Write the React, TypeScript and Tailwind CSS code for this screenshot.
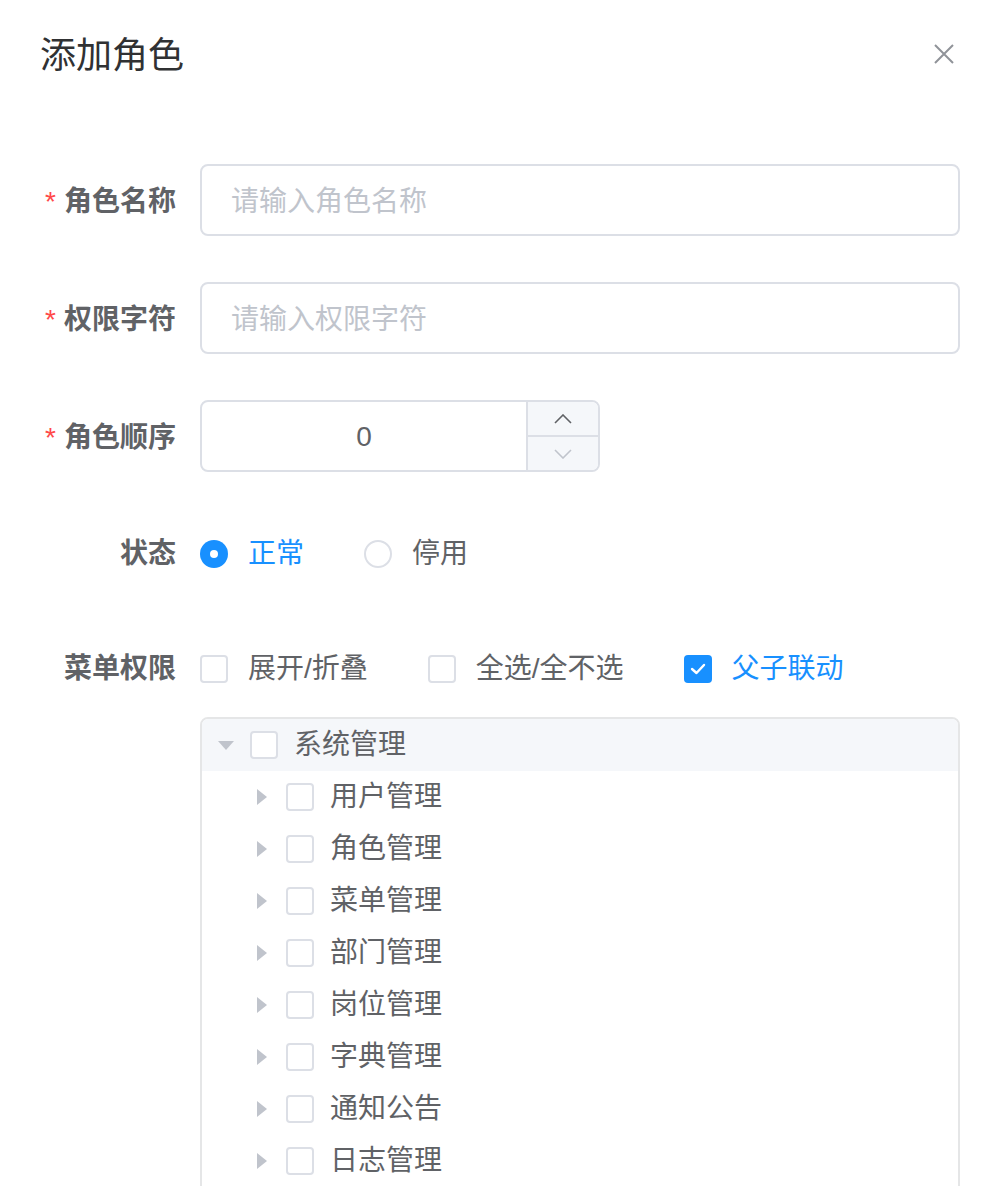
import * as React from 'react'

const FONT = 'font-["Helvetica_Neue",Helvetica,"Liberation_Sans","Noto_Sans_CJK_SC",sans-serif]'

const MENUS = ['用户管理', '角色管理', '菜单管理', '部门管理', '岗位管理', '字典管理', '通知公告', '日志管理']

function Box({ checked = false }: { checked?: boolean }) {
  if (checked) {
    return (
      <span className="flex h-[28px] w-[28px] shrink-0 items-center justify-center rounded-[4px] bg-[#1890ff]">
        <svg width="16" height="12" viewBox="0 0 16 12" fill="none">
          <polyline points="2,6 6.5,10 14,2" stroke="#fff" strokeWidth="2.4" strokeLinecap="round" strokeLinejoin="round" />
        </svg>
      </span>
    )
  }
  return <span className="block h-[28px] w-[28px] shrink-0 rounded-[4px] border-2 border-[#dcdfe6] bg-white" />
}

function Label({ text, required = false, shift = false }: { text: string; required?: boolean; shift?: boolean }) {
  return (
    <div
      className={`flex h-[72px] w-[160px] shrink-0 items-center justify-end pr-6 text-[28px] font-bold text-[#606266] ${shift ? 'pt-[4px]' : ''}`}
    >
      {required && <span className="mr-2 text-[28px] font-normal text-[#ff4949]">*</span>}
      {text}
    </div>
  )
}

function Caret({ down = false }: { down?: boolean }) {
  return (
    <span className="flex w-[48px] shrink-0 items-center justify-center">
      {down ? (
        <svg width="16" height="9" viewBox="0 0 16 9">
          <polygon points="0,0 16,0 8,9" fill="#c0c4cc" />
        </svg>
      ) : (
        <svg width="10" height="16" viewBox="0 0 10 16">
          <polygon points="0,0 10,8 0,16" fill="#c0c4cc" />
        </svg>
      )}
    </span>
  )
}

export default function App() {
  return (
    <div className={`h-[1186px] w-[1000px] overflow-hidden bg-white ${FONT}`}>
      {/* header */}
      <div className="flex items-start justify-between pl-10 pr-[46px] pt-8">
        <span className="text-[36px] leading-[48px] text-[#303133]">添加角色</span>
        <svg className="mt-3" width="20" height="20" viewBox="0 0 20 20">
          <path d="M1 1 L19 19 M19 1 L1 19" stroke="#909399" strokeWidth="2" />
        </svg>
      </div>

      <div className="mt-[84px] px-10">
        <div className="mb-[46px] flex">
          <Label text="角色名称" required shift />
          <div className="flex h-[72px] flex-1 items-center rounded-[8px] border-2 border-[#dcdfe6] px-[29px] pt-[4px] text-[28px] text-[#c0c4cc]">
            请输入角色名称
          </div>
        </div>

        <div className="mb-[46px] flex">
          <Label text="权限字符" required shift />
          <div className="flex h-[72px] flex-1 items-center rounded-[8px] border-2 border-[#dcdfe6] px-[29px] pt-[4px] text-[28px] text-[#c0c4cc]">
            请输入权限字符
          </div>
        </div>

        <div className="mb-[46px] flex">
          <Label text="角色顺序" required shift />
          <div className="flex h-[72px] w-[400px] overflow-hidden rounded-[8px] border-2 border-[#dcdfe6]">
            <div className="flex flex-1 items-center justify-center pt-[2px] text-[28px] text-[#606266]">0</div>
            <div className="flex w-[72px] flex-col border-l-2 border-[#dcdfe6] bg-[#f5f7fa]">
              <div className="flex flex-1 items-center justify-center border-b-2 border-[#dcdfe6]">
                <svg width="18" height="10" viewBox="0 0 18 10" fill="none">
                  <polyline points="1,9 9,1 17,9" stroke="#606266" strokeWidth="1.6" />
                </svg>
              </div>
              <div className="flex flex-1 items-center justify-center">
                <svg width="18" height="10" viewBox="0 0 18 10" fill="none">
                  <polyline points="1,1 9,9 17,1" stroke="#c0c4cc" strokeWidth="1.6" />
                </svg>
              </div>
            </div>
          </div>
        </div>

        <div className="mb-[43px] flex">
          <Label text="状态" />
          <div className="flex h-[72px] items-center text-[28px]">
            <span className="flex h-[28px] w-[28px] items-center justify-center rounded-full bg-[#1890ff]">
              <span className="block h-[8px] w-[8px] rounded-full bg-white" />
            </span>
            <span className="ml-5 text-[#1890ff]">正常</span>
            <span className="ml-[60px] block h-[28px] w-[28px] rounded-full border-2 border-[#dcdfe6]" />
            <span className="ml-5 text-[#606266]">停用</span>
          </div>
        </div>

        <div className="flex">
          <Label text="菜单权限" />
          <div className="flex flex-1 flex-col">
            <div className="flex h-[72px] items-center text-[28px] text-[#606266]">
              <Box />
              <span className="ml-5">展开/折叠</span>
              <span className="ml-[60px]"><Box /></span>
              <span className="ml-5">全选/全不选</span>
              <span className="ml-[60px]"><Box checked /></span>
              <span className="ml-5 text-[#1890ff]">父子联动</span>
            </div>
            {/* tree runs past the bottom edge */}
            <div className="mt-3 rounded-[8px] border-2 border-[#e5e6e7] pb-[40px] text-[28px] text-[#606266]">
              <div className="flex h-[52px] items-center rounded-t-[6px] bg-[#f5f7fa]">
                <Caret down />
                <Box />
                <span className="ml-4">系统管理</span>
              </div>
              {MENUS.map((m) => (
                <div key={m} className="flex h-[52px] items-center pl-[36px]">
                  <Caret />
                  <Box />
                  <span className="ml-4">{m}</span>
                </div>
              ))}
            </div>
          </div>
        </div>
      </div>
    </div>
  )
}
